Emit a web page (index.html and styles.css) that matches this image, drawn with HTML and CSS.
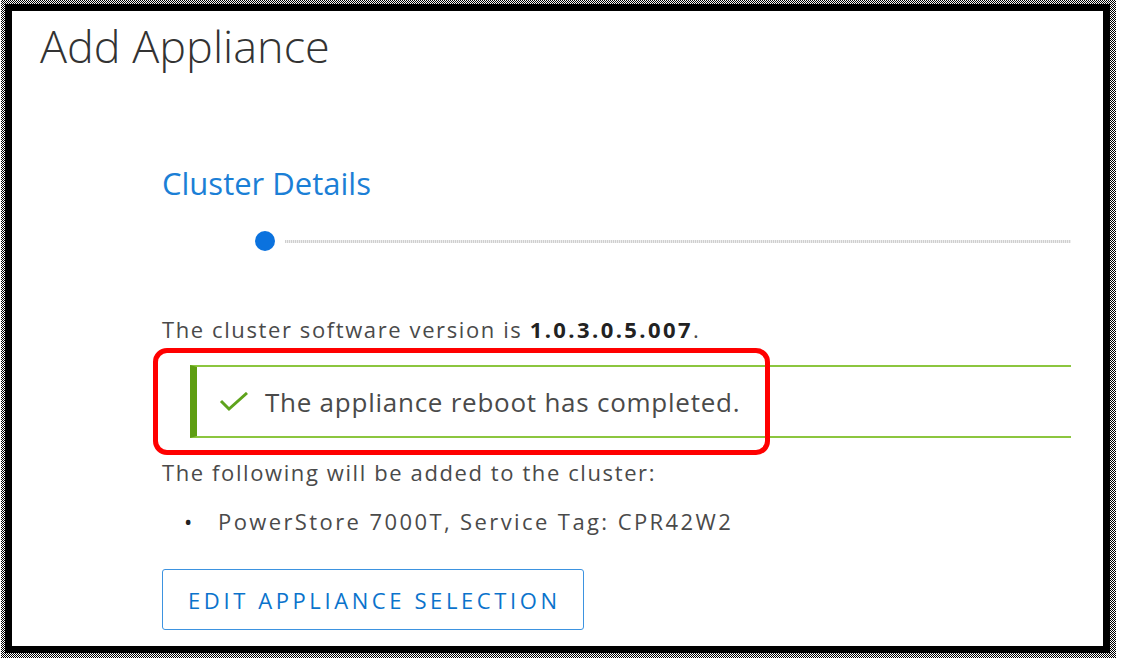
FILE: index.html
```html
<!DOCTYPE html>
<html lang="en">
<head>
    <meta charset="UTF-8">
    <title>Add Appliance</title>
    <link rel="stylesheet" href="styles.css">
</head>
<body>
    <div class="halo">
        <div class="frame">
            <h1 class="title">Add Appliance</h1>

            <div class="content">
                <!-- wizard step -->
                <div class="step-label">Cluster Details</div>
                <div class="step-track">
                    <span class="step-dot"></span>
                    <span class="step-line"></span>
                </div>

                <p class="version">The cluster software version is <b>1.0.3.0.5.007</b>.</p>

                <div class="alert">
                    <svg class="alert-icon" width="30" height="20" viewBox="0 0 30 20">
                        <polyline points="2,9 10,17 28,1" fill="none" stroke="#5ea31c" stroke-width="3"/>
                    </svg>
                    <span class="alert-text">The appliance reboot has completed.</span>
                </div>

                <p class="lead">The following will be added to the cluster:</p>
                <ul class="appliances">
                    <li>PowerStore 7000T, Service Tag: CPR42W2</li>
                </ul>

                <button class="btn-outline">EDIT APPLIANCE SELECTION</button>
            </div>

            <!-- red annotation round the alert -->
            <div class="callout"></div>
        </div>
    </div>
</body>
</html>
```

FILE: styles.css
```css
body {
    margin: 0;
    background: #fff;
    font-family: "Open Sans", Arial, sans-serif;
    color: #4a4a4a;
}

/* screenshot frame */
.halo {
    margin-left: 1px;
    width: 1106px;
    height: 649px;
    padding: 4px 5px 5px 4px;
    background: repeating-conic-gradient(#000 0 25%, #fff 0 50%) 0 0 / 2px 2px;
}
.frame {
    position: relative;
    box-sizing: border-box;
    width: 1105px;
    height: 649px;
    border: 7px solid #000;
    background: #fff;
    overflow: hidden;
}

.title {
    margin: 8px 0 0 28px;
    font-size: 45px;
    line-height: 54px;
    font-weight: 300;
    color: #333;
}

.content {
    margin-left: 150px;
    width: 909px;
}

.step-label {
    margin-top: 92px;
    font-size: 31px;
    line-height: 36px;
    color: #1b7fd6;
}
.step-track {
    display: flex;
    align-items: center;
    gap: 10px;
    margin-top: 30px;
    padding-left: 93px;
    height: 20px;
}
.step-dot {
    width: 20px;
    height: 20px;
    border-radius: 50%;
    background: #0b72de;
}
.step-line {
    flex: 1;
    height: 3px;
    background: repeating-linear-gradient(90deg, #cfcfcf 0 1px, #eee 1px 2px);
}

.version,
.lead {
    margin: 0;
    font-size: 22px;
    line-height: 28px;
    letter-spacing: 1.6px;
}
.version {
    margin-top: 64px;
}
.version b {
    color: #222;
    font-weight: 700;
    letter-spacing: 2.4px;
}

.alert {
    display: flex;
    align-items: center;
    box-sizing: border-box;
    height: 73px;
    margin: 22px 0 0 28px;
    padding-left: 22px;
    border-top: 2px solid #8cc63f;
    border-bottom: 2px solid #8cc63f;
    border-left: 7px solid #5e9e12;
}
.alert-icon {
    margin-right: 16px;
}
.alert-text {
    font-size: 26px;
    line-height: 30px;
    letter-spacing: 0.75px;
}

.lead {
    margin-top: 20px;
}

.appliances {
    list-style: none;
    margin: 21px 0 0 22px;
    padding: 0;
    font-size: 22px;
    line-height: 28px;
    letter-spacing: 2.4px;
}
.appliances li::before {
    content: "\2022";
    display: inline-block;
    width: 34px;
    letter-spacing: 0;
    color: #222;
}

.btn-outline {
    margin-top: 34px;
    height: 61px;
    padding: 0 22px 0 25px;
    border: 1px solid #3d93e0;
    border-radius: 3px;
    background: #fff;
    color: #0a73cc;
    font-family: "Open Sans", Arial, sans-serif;
    font-size: 22px;
    letter-spacing: 3.6px;
    cursor: pointer;
}

.callout {
    position: absolute;
    left: 141px;
    top: 337px;
    width: 617px;
    height: 107px;
    box-sizing: border-box;
    border: 5px solid #f00;
    border-radius: 14px;
}
```
